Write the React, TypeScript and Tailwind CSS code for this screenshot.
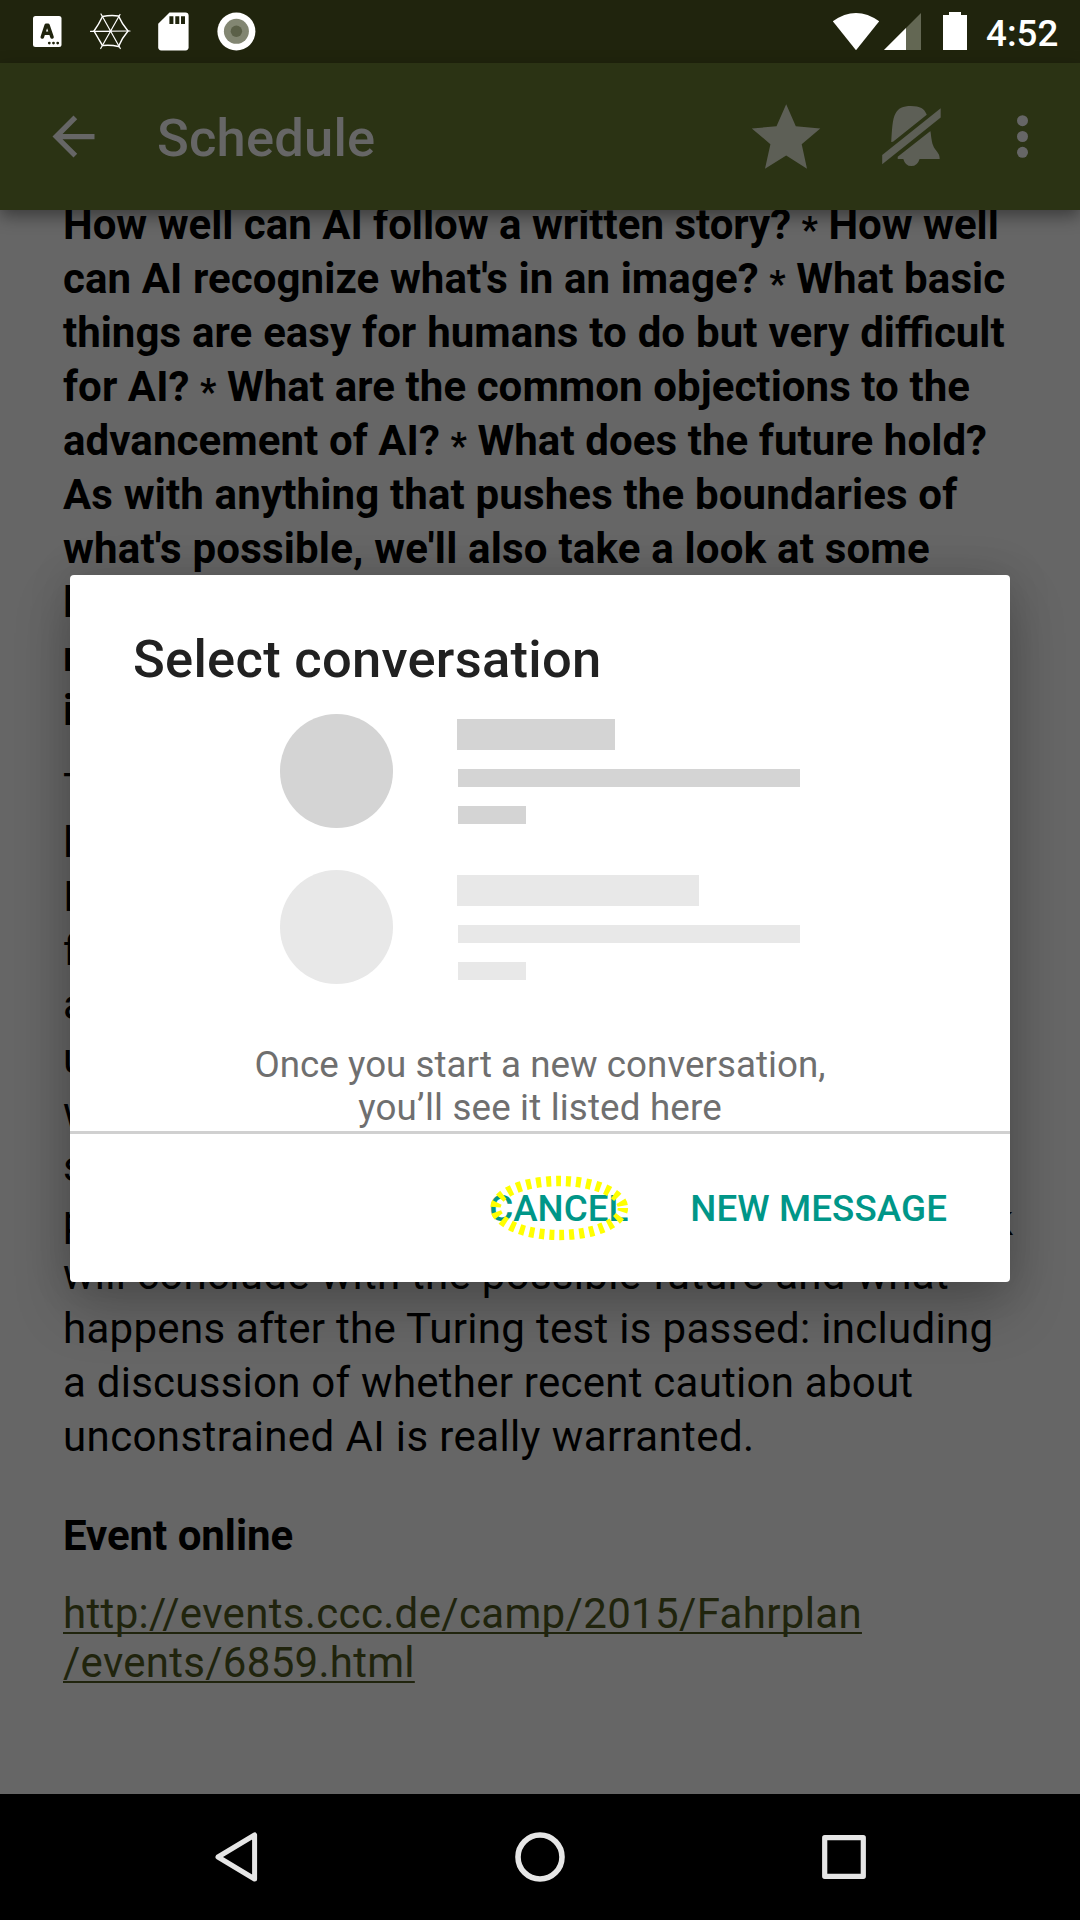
import type { ReactNode } from 'react';

function Line({ children, ls = 'tracking-normal' }: { children: ReactNode; ls?: string }) {
  return <div className={`h-[54px] whitespace-nowrap ${ls}`}>{children}</div>;
}

function Star() {
  return <span className="relative top-[3px] text-[36px] leading-none">*</span>;
}

function StatusBar() {
  return (
    <div className="flex h-[63px] shrink-0 items-center bg-[#20240d] text-white">
      <svg className="ml-[32px] h-[63px] w-[30px]" viewBox="32 0 30 63">
        <rect x="33" y="16" width="28.5" height="31" rx="2.5" fill="#fff" />
        <path d="M42.3 37 L46.2 25.3 H48 L52 37 M43.8 33.2 H50.6" fill="none" stroke="#20240d" strokeWidth="3.6" strokeLinecap="round" strokeLinejoin="round" />
        <circle cx="49.3" cy="43.1" r="1.4" fill="#20240d" />
        <circle cx="53.5" cy="43.1" r="1.4" fill="#20240d" />
        <circle cx="57.7" cy="43.1" r="1.4" fill="#20240d" />
      </svg>
      <svg className="ml-[27px] h-[63px] w-[42px]" viewBox="89 0 42 63" fill="none" stroke="#fff" strokeLinecap="round">
        <path d="M102.5 16.5 Q110.5 15 118.5 16 Q122 24 128 31 Q122 38 118.5 46.5 Q110.5 44.5 102.5 45.5 Q98 38 94 31 Q99 24 102.5 16.5Z" strokeWidth="1.5" />
        <path d="M90.5 31.3 L130 31 M101 14 L120.3 48.5 M120 14.5 L100.7 48.5" strokeWidth="1.2" />
      </svg>
      <svg className="ml-[26px] h-[63px] w-[32px]" viewBox="157 0 32 63">
        <path d="M169.5 12.5 H185.5 Q188.6 12.5 188.6 15.6 V47.3 Q188.6 50.4 185.5 50.4 H161.3 Q158.2 50.4 158.2 47.3 V23.7Z" fill="#fff" />
        <path d="M169.4 16.3h4v7.7h-4z M175.3 16.3h4v7.7h-4z M181 16.3h4v7.7h-4z" fill="#20240d" />
      </svg>
      <svg className="ml-[28px] h-[63px] w-[40px]" viewBox="217 0 40 63">
        <circle cx="236.4" cy="31.5" r="19" fill="#fff" />
        <circle cx="236.4" cy="31.3" r="12.5" fill="#828672" />
        <circle cx="236.4" cy="31.3" r="5.7" fill="#5b6048" />
      </svg>
      <svg className="ml-auto h-[63px] w-[48px]" viewBox="832 0 48 63">
        <path d="M832.8 21.3 Q856 4.7 879.2 21.3 L856 50.3Z" fill="#fff" />
      </svg>
      <svg className="ml-[4px] h-[63px] w-[38px]" viewBox="884 0 38 63">
        <path d="M921 13 V50 H884Z" fill="#636753" />
        <path d="M906 28 V50 H884Z" fill="#fff" />
      </svg>
      <svg className="ml-[20px] h-[63px] w-[26px]" viewBox="942 0 26 63">
        <path d="M949 12 H961 V15 H967 V50 H943 V15 H949Z" fill="#fff" />
      </svg>
      <span className="mt-[5px] ml-[18px] w-[94px] text-[36.75px] leading-[44px] font-medium">4:52</span>
    </div>
  );
}

function AppBar() {
  return (
    <div className="relative z-10 flex h-[147px] shrink-0 items-center bg-[#2b3314] shadow-[0_6px_16px_rgba(0,0,0,0.42)]">
      <svg className="ml-[42px] h-[63px] w-[63px]" viewBox="0 0 24 24" fill="#666">
        <path d="M20 11H7.83l5.59-5.59L12 4l-8 8 8 8 1.41-1.41L7.83 13H20v-2z" />
      </svg>
      <h1 className="mt-[3px] ml-[52px] text-[52.5px] leading-[62px] font-medium tracking-[0.2px] text-[#666]">Schedule</h1>
      <svg className="ml-auto h-[147px] w-[70px]" viewBox="751 63 70 147">
        <path d="M786.2 104.3 L795.8 126.3 L820.3 128.5 L801.7 144.2 L807 168.8 L786.2 155.6 L765 168.8 L770.4 144.2 L751.8 128.5 L776.5 126.3Z" fill="#5d5f56" />
      </svg>
      <svg className="ml-[60px] h-[147px] w-[61px]" viewBox="881 63 61 147" fill="#5d5f56">
        <path d="M891.2 142 C892 130 892.3 119 895.5 113.5 C898 108.3 903 106 911 106 C920 106 924.5 108.7 926.8 114.8 L893 141.7Z" />
        <path d="M940.7 108.3 V117.5 L882.2 164.3 V155Z" />
        <path d="M930.5 131.3 C931.5 139 931.8 144.5 935 149 C938.3 153.5 939.7 154.7 939.7 158.9 H919.6 Q917.5 166 911.3 166 Q905.3 166 903.3 158.9 H897.7 V156.8 L929.5 131.8Z" />
      </svg>
      <svg className="mr-[50px] ml-[74px] h-[147px] w-[14px]" viewBox="1016 63 14 147" fill="#666">
        <circle cx="1022.5" cy="120.7" r="5.5" />
        <circle cx="1022.5" cy="136.5" r="5.5" />
        <circle cx="1022.5" cy="152.3" r="5.5" />
      </svg>
    </div>
  );
}

function Article() {
  return (
    <div className="h-[1584px] shrink-0 overflow-hidden bg-[#666] pl-[63px] text-[42px] leading-[54px] text-black">
      <div className="-mt-[12px] font-bold">
        <Line>How well can AI follow a written story? <Star /> How well</Line>
        <Line ls="tracking-[0.09px]">can AI recognize what's in an image? <Star /> What basic</Line>
        <Line ls="[word-spacing:0.6px]">things are easy for humans to do but very difficult</Line>
        <Line ls="tracking-[0.07px]">for AI? <Star /> What are the common objections to the</Line>
        <Line ls="tracking-[0.08px]">advancement of AI? <Star /> What does the future hold?</Line>
        <Line ls="tracking-[0.15px]">As with anything that pushes the boundaries of</Line>
        <Line ls="tracking-[0.2px]">what's possible, we'll also take a look at some</Line>
        <Line>l</Line>
        <Line>r</Line>
        <Line>i</Line>
      </div>
      <div className="mt-[24px]">
        <Line>T</Line>
        <Line>l</Line>
        <Line>I</Line>
        <Line>f</Line>
        <Line>a</Line>
        <Line>u</Line>
        <Line>w</Line>
        <Line>s</Line>
        <div className="flex h-[54px] justify-between pr-[67px]">
          <span>p</span>
          <span>k</span>
        </div>
        <Line ls="tracking-[0.29px]">will conclude with the possible future and what</Line>
        <Line ls="tracking-[0.3px]">happens after the Turing test is passed: including</Line>
        <Line ls="tracking-[0.25px]">a discussion of whether recent caution about</Line>
        <Line ls="tracking-[0.39px]">unconstrained AI is really warranted.</Line>
      </div>
      <h2 className="mt-[45px] font-bold tracking-[-0.05px]">Event online</h2>
      <a className="mt-[26px] block leading-[49px] tracking-[0.34px] text-[#20240d] underline decoration-[2px] underline-offset-[4px] [text-decoration-skip-ink:none]">
        http://events.ccc.de/camp/2015/Fahrplan
        <br />
        <span className="tracking-[0.28px]">/events/6859.html</span>
      </a>
    </div>
  );
}

function Placeholder({ tone, width }: { tone: string; width: string }) {
  return (
    <div className="flex h-[114px]">
      <div className={`h-[114px] w-[113px] rounded-full ${tone}`} />
      <div className="ml-[64px] pt-[5px]">
        <div className={`h-[31px] ${width} ${tone}`} />
        <div className={`mt-[19px] ml-px h-[18px] w-[342px] ${tone}`} />
        <div className={`mt-[19px] ml-px h-[18px] w-[68px] ${tone}`} />
      </div>
    </div>
  );
}

function Dialog() {
  return (
    <div className="absolute top-[575px] left-[70px] z-20 flex h-[707px] w-[940px] flex-col rounded-[4px] bg-white shadow-[0_26px_56px_rgba(0,0,0,0.22),0_0_44px_rgba(0,0,0,0.14)]">
      <h2 className="mt-[53px] ml-[63px] h-[62px] text-[52.5px] leading-[62px] font-medium tracking-[0.27px] text-[#212121]">Select conversation</h2>
      <div className="mt-[24px] ml-[210px] flex flex-col gap-[42px]">
        <Placeholder tone="bg-[#d4d4d4]" width="w-[158px]" />
        <Placeholder tone="bg-[#e8e8e8]" width="w-[242px]" />
      </div>
      <p className="mt-[59px] h-[88px] text-center text-[36.75px] leading-[43px] text-[#6f6f6f]">
        <span className="tracking-[0.02px]">Once you start a new conversation,</span>
        <br />
        <span className="tracking-[0.15px]">you’ll see it listed here</span>
      </p>
      <div className="h-[3px] bg-[#d0d0d0]" />
      <div className="flex flex-1 items-center justify-end pt-[2px] pr-[63px] text-[36.75px] leading-[44px] font-medium text-[#009688]">
        <div className="relative">
          CANCEL
          <svg className="absolute -top-[15px] left-[-1px] h-[72px] w-[142px]" viewBox="487 1172 142 72" fill="none">
            <ellipse cx="558.2" cy="1208" rx="63.7" ry="27" stroke="#ff0" strokeWidth="10.4" strokeDasharray="5 5" strokeDashoffset="1" />
          </svg>
        </div>
        <span className="ml-[62px] tracking-[0.1px]">NEW MESSAGE</span>
      </div>
    </div>
  );
}

function NavBar() {
  return (
    <div className="flex h-[126px] shrink-0 items-center justify-between bg-black px-[211px]">
      <svg className="h-[56px] w-[50px]" viewBox="211 1829 50 56" fill="none" stroke="#e6e6e6" strokeWidth="5" strokeLinejoin="round">
        <path d="M254.6 1835 V1879 L218 1857Z" />
      </svg>
      <svg className="h-[56px] w-[56px]" viewBox="512 1829 56 56" fill="none" stroke="#e6e6e6" strokeWidth="5.6">
        <circle cx="540" cy="1857" r="22" />
      </svg>
      <svg className="h-[56px] w-[50px]" viewBox="819 1829 50 56" fill="none" stroke="#e6e6e6" strokeWidth="5.2" strokeLinejoin="round">
        <rect x="824.7" y="1837.7" width="38.6" height="38.6" />
      </svg>
    </div>
  );
}

export default function App() {
  return (
    <div className="relative flex h-[1920px] w-[1080px] flex-col overflow-hidden bg-[#666] font-['Roboto',sans-serif]">
      <StatusBar />
      <AppBar />
      <Article />
      <NavBar />
      <Dialog />
    </div>
  );
}
